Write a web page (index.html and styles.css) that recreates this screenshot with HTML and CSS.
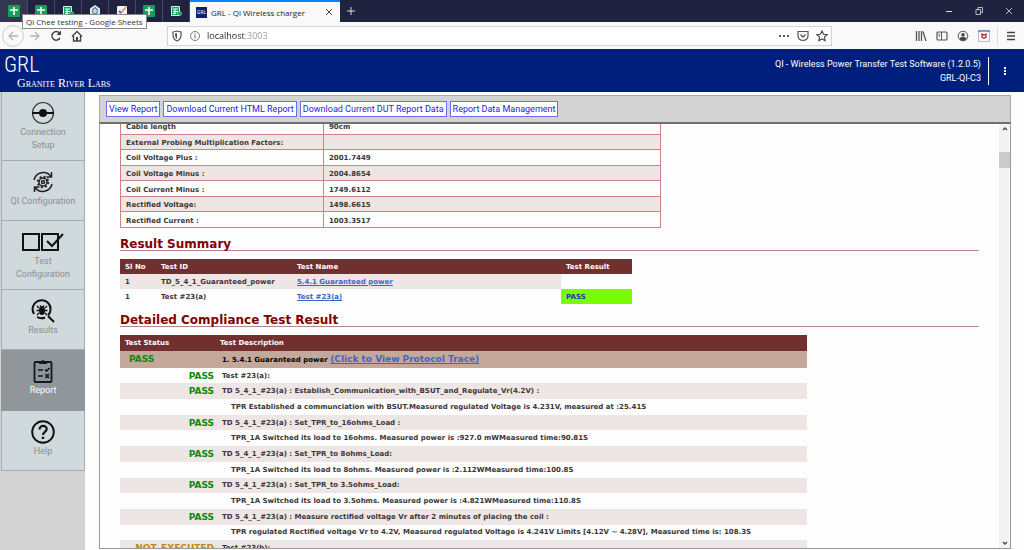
FILE: index.html
```html
<!DOCTYPE html>
<html lang="en">
<head>
<meta charset="utf-8">
<title>GRL - Qi Wireless charger</title>
<link rel="stylesheet" href="styles.css">
</head>
<body>
<svg class="defs" aria-hidden="true">
  <symbol id="sheet" viewBox="0 0 12 12"><rect width="12" height="12" rx="1" fill="#12a05c"/><path d="M6 2v8M2 5h8" stroke="#fff" stroke-width="1.6"/></symbol>
  <symbol id="form" viewBox="0 0 12 12"><path d="M1.5 1.500h8v9h-8z" fill="#12a05c" stroke="#d9f3e5"/><path d="M3 4h5M3 6.500h5M5 4v4.500M3 8.500h3" stroke="#fff"/><path d="M9.500 6l2.500 2.500L9.500 11 7 8.500z" fill="#12a05c" stroke="#d9f3e5" stroke-width=".7"/></symbol>
</svg>
<div class="tabs">
  <button class="tab first" aria-label="Google Sheets"><svg><use href="#sheet"/></svg></button>
  <button class="tab" aria-label="Qi Chee testing"><svg><use href="#sheet"/></svg></button>
  <button class="tab" aria-label="Form"><svg><use href="#form"/></svg></button>
  <button class="tab" aria-label="Layers"><svg viewBox="0 0 12 12"><path d="M6 0l5 3.500v5L6 12 1 8.500v-5z" fill="#e9f1f7"/><path d="M3 5.500l3-3 3 3M3 6.500l3 3 3-3" fill="none" stroke="#3f83b8" stroke-width="1.300"/><path d="M4 6h4" stroke="#e2a53b"/></svg></button>
  <button class="tab" aria-label="Tasks"><svg viewBox="0 0 12 12"><rect x="1" y="1" width="10" height="10" rx="1" fill="#f4f4f4"/><path d="M3 6l2 2 5-6" fill="none" stroke="#db8d49" stroke-width="1.500"/><path d="M3 6l2 2" stroke="#4c79be" stroke-width="2"/></svg></button>
  <button class="tab" aria-label="Google Sheets"><svg><use href="#sheet"/></svg></button>
  <button class="tab" aria-label="Form"><svg><use href="#form"/></svg></button>
  <div class="tab active">
    <span class="favicon">GRL</span>
    <span class="tab-title">GRL - Qi Wireless charger</span>
    <button aria-label="Close tab"><svg viewBox="0 0 8 8"><path d="M1 1l6 6M7 1L1 7" stroke="#444"/></svg></button>
  </div>
  <button class="new-tab" aria-label="New tab"><svg viewBox="0 0 10 10"><path d="M5 1v8M1 5h8" stroke="#ddd"/></svg></button>
  <div class="window-buttons">
    <button aria-label="Minimize"><svg viewBox="0 0 8 8"><path d="M1 4.500h6" stroke="#ddd"/></svg></button>
    <button aria-label="Restore"><svg viewBox="0 0 8 8"><path d="M1 2.500h4.500v5H1zM3 2.500v-2h4.500v5h-2" fill="none" stroke="#ddd" stroke-width=".8"/></svg></button>
    <button aria-label="Close"><svg viewBox="0 0 8 8"><path d="M1 1l6 6M7 1L1 7" stroke="#ddd" stroke-width=".8"/></svg></button>
  </div>
  <div class="tooltip" role="tooltip">Qi Chee testing - Google Sheets</div>
</div>
<div class="toolbar">
  <div class="nav">
    <button class="back" aria-label="Back"><svg viewBox="0 0 12 12"><path d="M11 6H2M6 2L2 6l4 4" fill="none" stroke="#b5b5b5" stroke-width="1.300"/></svg></button>
    <button aria-label="Forward"><svg viewBox="0 0 12 12"><path d="M1 6h9M6 2l4 4-4 4" fill="none" stroke="#b5b5b5" stroke-width="1.300"/></svg></button>
    <button aria-label="Reload"><svg viewBox="0 0 12 12"><path d="M10 8a4.300 4.300 0 1 1-.5-5" fill="none" stroke="#444" stroke-width="1.500"/><path d="M11 .5v4.500H6.500z" fill="#444"/></svg></button>
    <button aria-label="Home"><svg viewBox="0 0 12 12"><path d="M1 6.500L6 1.500l5 5M2.500 6v5h7V6" fill="none" stroke="#444" stroke-width="1.400"/><path d="M5 7h2v4H5z" fill="#444"/></svg></button>
  </div>
  <div class="address">
    <svg viewBox="0 0 12 12"><path d="M2 2l4-1 4 1v3c0 3-1.500 5-4 6-2.500-1-4-3-4-6z" fill="none" stroke="#555" stroke-width="1.200"/><path d="M6 3v6C4.500 8 4 6.500 4 3.500z" fill="#555"/></svg>
    <svg viewBox="0 0 12 12"><circle cx="6" cy="6" r="4.500" fill="none" stroke="#777"/><path d="M6 5.300v3.200M6 3.200v1.200" stroke="#666" stroke-width="1.100"/></svg>
    <input class="url" type="text" aria-label="Address" value="localhost:3003">
    <div class="page-actions">
      <button aria-label="Page actions"><svg viewBox="0 0 12 12"><path d="M1 6h2M5 6h2M9 6h2" stroke="#555" stroke-width="2"/></svg></button>
      <button aria-label="Save to Pocket"><svg viewBox="0 0 12 12"><path d="M1 1.500h10V6a5 4.500 0 0 1-10 0z" fill="none" stroke="#555" stroke-width="1.200"/><path d="M3.500 4.500L6 7l2.500-2.500" fill="none" stroke="#555" stroke-width="1.300"/></svg></button>
      <button aria-label="Bookmark"><svg viewBox="0 0 12 12"><path d="M6 1l1.500 3.300 3.600.4-2.700 2.400.8 3.600L6 8.900l-3.200 1.800.8-3.600L.9 4.700l3.600-.4z" fill="none" stroke="#444" stroke-width="1.100"/></svg></button>
    </div>
  </div>
  <div class="tools">
    <button aria-label="Library"><svg viewBox="0 0 12 12"><path d="M1.500 1v10M4 1v10M6.500 1v10M8 1.500l3 9.500" stroke="#555" stroke-width="1.300"/></svg></button>
    <button aria-label="Sidebars"><svg viewBox="0 0 12 12"><rect x="1" y="2" width="10" height="8" rx="1" fill="none" stroke="#555" stroke-width="1.200"/><path d="M5.500 2v8M2.500 4.200H4M2.500 6H4" stroke="#555"/></svg></button>
    <button aria-label="Account"><svg viewBox="0 0 12 12"><circle cx="6" cy="6" r="4.800" fill="none" stroke="#555"/><circle cx="6" cy="4.700" r="1.800" fill="#444"/><path d="M2.500 9c1-3 6-3 7 0-1.500 2-5.500 2-7 0z" fill="#444"/></svg></button>
    <button aria-label="McAfee"><svg viewBox="0 0 12 12"><rect x=".5" y=".5" width="11" height="11" fill="#f5f5fa" stroke="#b9bcd2"/><path d="M0 1h12" stroke="#5b89c4" stroke-width="1.500"/><path d="M4 4.200L6 5l2-.8v3L6 8.300 4 7.200z" fill="none" stroke="#c01c28" stroke-width="1.300"/></svg></button>
  </div>
  <button class="menu" aria-label="Menu"><svg viewBox="0 0 12 12"><path d="M2 2.500h8M2 6h8M2 9.500h8" stroke="#444" stroke-width="1.300"/></svg></button>
</div>
<header class="app-header">
  <div class="logo"><span class="mark">GRL</span><span class="company">Granite River Labs</span></div>
  <div class="product"><div>QI - Wireless Power Transfer Test Software (1.2.0.5)</div><div>GRL-QI-C3</div></div>
  <button class="more" aria-label="More"><svg viewBox="0 0 4 8"><path d="M1 0h2v2H1zM1 3h2v2H1zM1 6h2v2H1z" fill="#fff"/></svg></button>
</header>
<div class="app">
  <nav class="sidebar">
    <a class="item tall" href="#"><svg viewBox="0 0 24 24"><circle cx="12" cy="12" r="10.500" fill="none" stroke="#333" stroke-width="1.200"/><path d="M1 12h22" stroke="#111" stroke-width="2"/><circle cx="12" cy="12" r="4" fill="#111"/></svg><span>Connection Setup</span></a>
    <a class="item" href="#"><svg viewBox="0 0 24 24"><g fill="none" stroke="#222" stroke-width="1.500"><path d="M3 10a9.500 9.500 0 0 1 17-3.500M21 14a9.500 9.500 0 0 1-17 3.500M20.500 2v5h-5M3.500 22v-5h5"/><circle cx="12" cy="12" r="4"/><circle cx="12" cy="12" r="1.500"/><circle cx="12" cy="12" r="5.200" stroke-width="2" stroke-dasharray="2 2.080"/></g></svg><span>QI Configuration</span></a>
    <a class="item tall" href="#"><svg class="wide" viewBox="0 0 42 20"><path d="M1 2h16v16H1zM20 2h16v16H20z" fill="none" stroke="#111" stroke-width="2"/><path d="M25 9l5 5L41 2" fill="none" stroke="#111" stroke-width="2"/></svg><span>Test Configuration</span></a>
    <a class="item" href="#"><svg viewBox="0 0 24 24"><g fill="none" stroke="#111" stroke-width="2"><path d="M3 15A9 9 0 1 1 17 16.500M14 18.500A9 9 0 0 1 6 18M17 17l6 6"/><path d="M6 7l2 2M16 7l-2 2M5.500 11.500h11M6 16l2-2M16 16l-2-2" stroke-width="1.300"/></g><ellipse cx="11" cy="11.500" rx="3" ry="4.500" fill="#111"/><path d="M9 6l1 2M13 6l-1 2" stroke="#111"/></svg><span>Results</span></a>
    <a class="item current" href="#"><svg viewBox="0 0 24 24"><rect x="3.500" y="3" width="17" height="20" rx="1" fill="none" stroke="#15181c" stroke-width="1.800"/><path d="M8 2h2.500q1.500-2 3 0H16v3H8z" fill="#15181c"/><path d="M7 11h5M7 17h5M14 10.500l1.500 1.500 3-3M14.500 15l3.500 4M18 15l-3.500 4" fill="none" stroke="#15181c" stroke-width="1.700"/></svg><span>Report</span></a>
    <a class="item" href="#"><svg viewBox="0 0 24 24"><circle cx="12" cy="12" r="10.800" fill="none" stroke="#111" stroke-width="1.900"/><path d="M8.500 9.500c0-5 7.500-4.500 7.200-.3C15.500 12 12 12 12 15" fill="none" stroke="#111" stroke-width="2.200"/><path d="M10.800 16.800h2.400v2.200h-2.400z" fill="#111"/></svg><span>Help</span></a>
  </nav>
  <main class="panel">
    <div class="actions">
      <button>View Report</button>
      <button>Download Current HTML Report</button>
      <button>Download Current DUT Report Data</button>
      <button>Report Data Management</button>
    </div>
    <div class="viewer">
      <div class="report">
        <table class="info">
          <tr><td>Cable length</td><td>90cm</td></tr>
          <tr><td>External Probing Multiplication Factors:</td><td></td></tr>
          <tr><td>Coil Voltage Plus :</td><td>2001.7449</td></tr>
          <tr><td>Coil Voltage Minus :</td><td>2004.8654</td></tr>
          <tr><td>Coil Current Minus :</td><td>1749.6112</td></tr>
          <tr><td>Rectified Voltage:</td><td>1498.6615</td></tr>
          <tr><td>Rectified Current :</td><td>1003.3517</td></tr>
        </table>
        <h2>Result Summary</h2>
        <table class="summary">
          <tr><th>Sl No</th><th>Test ID</th><th>Test Name</th><th>Test Result</th></tr>
          <tr class="shade"><td>1</td><td>TD_5_4_1_Guaranteed_power</td><td><a href="#">5.4.1 Guaranteed power</a></td><td class="blank"></td></tr>
          <tr><td>1</td><td>Test #23(a)</td><td><a href="#">Test #23(a)</a></td><td class="ok">PASS</td></tr>
        </table>
        <h2>Detailed Compliance Test Result</h2>
        <table class="detail">
          <tr><th>Test Status</th><th>Test Description</th></tr>
          <tr class="group"><td>PASS</td><td>1. 5.4.1 Guaranteed power <a href="#">(Click to View Protocol Trace)</a></td></tr>
          <tr><td>PASS</td><td>Test #23(a):</td></tr>
          <tr class="shade"><td>PASS</td><td>TD 5_4_1_#23(a) : Establish_Communication_with_BSUT_and_Regulate_Vr(4.2V) :</td></tr>
          <tr class="note"><td></td><td>TPR Established a communciation with BSUT.Measured regulated Voltage is 4.231V, measured at :25.41S</td></tr>
          <tr class="shade"><td>PASS</td><td>TD 5_4_1_#23(a) : Set_TPR_to_16ohms_Load :</td></tr>
          <tr class="note"><td></td><td>TPR_1A Switched its load to 16ohms. Measured power is :927.0 mWMeasured time:90.81S</td></tr>
          <tr class="shade"><td>PASS</td><td>TD 5_4_1_#23(a) : Set_TPR_to 8ohms_Load:</td></tr>
          <tr class="note"><td></td><td>TPR_1A Switched its load to 8ohms. Measured power is :2.112WMeasured time:100.8S</td></tr>
          <tr class="shade"><td>PASS</td><td>TD 5_4_1_#23(a) : Set_TPR_to 3.5ohms_Load:</td></tr>
          <tr class="note"><td></td><td>TPR_1A Switched its load to 3.5ohms. Measured power is :4.821WMeasured time:110.8S</td></tr>
          <tr class="shade"><td>PASS</td><td>TD 5_4_1_#23(a) : Measure rectified voltage Vr after 2 minutes of placing the coil :</td></tr>
          <tr class="note"><td></td><td>TPR regulated Rectified voltage Vr to 4.2V, Measured regulated Voltage is 4.241V Limits [4.12V ~ 4.28V], Measured time is: 108.3S</td></tr>
          <tr class="shade skipped"><td>NOT_EXECUTED</td><td>Test #23(b):</td></tr>
        </table>
      </div>
      <div class="scrollbar">
        <svg viewBox="0 0 8 8"><path d="M2 5l2-2 2 2" fill="none" stroke="#444" stroke-width="1.300"/></svg>
        <div class="track"><div class="thumb"></div></div>
        <svg viewBox="0 0 8 8"><path d="M2 3l2 2 2-2" fill="none" stroke="#444" stroke-width="1.300"/></svg>
      </div>
    </div>
  </main>
</div>
</body>
</html>
```
FILE: styles.css
```css
* { box-sizing: border-box; }
body {
  margin: 0;
  height: 100vh;
  display: flex;
  flex-direction: column;
  overflow: hidden;
  background: #fdfdfd;
  font-family: Roboto, "Liberation Sans", Arial, sans-serif;
  font-size: 9px;
}
button {
  margin: 0;
  padding: 0;
  border: 0;
  background: none;
  font: inherit;
  display: flex;
  align-items: center;
  justify-content: center;
}
svg { display: block; flex: none; width: 12px; height: 12px; }
.defs { position: absolute; width: 0; height: 0; }

/* Browser tabs */
.tabs {
  position: relative;
  display: flex;
  flex: none;
  height: 22px;
  background: #202340;
}
.tab { width: 27px; border-right: 1px solid #45486a; }
.tab.first { width: 28px; background: #34364f; }
.tab.active {
  width: 150px;
  display: flex;
  align-items: center;
  gap: 4px;
  padding: 0 7px 0 6px;
  background: #f9f9fa;
  border: 0;
  border-top: 2px solid #0a84ff;
  font-family: "Open Sans", "Noto Sans", sans-serif;
  font-size: 8px;
  color: #222;
}
.favicon {
  width: 11px;
  line-height: 11px;
  background: #0b2270;
  color: #fff;
  font-size: 5px;
  text-align: center;
}
.tab-title { flex: 1; white-space: nowrap; }
.tab.active svg { width: 8px; height: 8px; }
.new-tab { width: 22px; }
.new-tab svg { width: 10px; height: 10px; }
.window-buttons { display: flex; gap: 6px; margin-left: auto; padding-right: 3px; }
.window-buttons button { width: 24px; }
.window-buttons svg { width: 8px; height: 8px; }
.tooltip {
  position: absolute;
  z-index: 2;
  left: 22px;
  top: 14px;
  padding: 0 3px;
  border: 1px solid #888;
  background: #fff;
  color: #333;
  font-family: "Open Sans", "Noto Sans", sans-serif;
  font-size: 8px;
  line-height: 13px;
  white-space: nowrap;
}

/* Browser toolbar */
.toolbar {
  display: flex;
  flex: none;
  align-items: center;
  height: 27px;
  background: #f9f9fa;
}
.nav { display: flex; align-items: center; width: 167px; padding-left: 2px; }
.nav button { width: 21px; height: 21px; }
.nav .back { border: 1px solid #ccc; border-radius: 50%; width: 22px; height: 22px; }
.address {
  flex: 1;
  display: flex;
  align-items: center;
  gap: 6px;
  height: 20px;
  padding: 0 3px;
  background: #fff;
  border: 1px solid #d4d4d4;
}
.url {
  flex: 1;
  min-width: 0;
  border: 0;
  padding: 0;
  font-family: "Open Sans", "Noto Sans", sans-serif;
  font-size: 9px;
  color: transparent;
  background: linear-gradient(90deg, #222 38px, #999 38px);
  background-clip: text;
  -webkit-background-clip: text;
}
.page-actions { display: flex; gap: 7px; }
.tools { display: flex; gap: 9px; padding: 0 7px 0 83px; }
.menu { width: 27px; height: 20px; border-left: 1px solid #ddd; }

/* Application header */
.app-header {
  display: flex;
  flex: none;
  align-items: center;
  height: 43px;
  padding: 0 17px 0 4px;
  background: #001f7c;
  color: #fff;
}
.logo { display: flex; flex-direction: column; flex: 1; }
.mark {
  font-family: "Liberation Sans Narrow", "Roboto Condensed", "Open Sans Condensed", Lato, sans-serif;
  font-size: 22px;
  font-weight: 300;
  line-height: 24px;
}
.company {
  padding-left: 13px;
  font-family: "Liberation Serif", serif;
  font-size: 12px;
  line-height: 12px;
  font-variant: small-caps;
}
.product { padding: 0 7px; border-right: 1px solid #fff; line-height: 14px; text-align: right; }
.more { width: 4px; margin-left: 14px; }
.more svg { width: 4px; height: 8px; }

/* Side navigation */
.app { display: flex; flex: 1; min-height: 0; }
.sidebar {
  width: 85px;
  padding-left: 1px;
  background: #d3d3d3;
}
.item {
  display: flex;
  flex-direction: column;
  align-items: center;
  height: 60px;
  padding: 9px 12px 0;
  gap: 1px;
  border: 1px solid #a3aeb3;
  border-top: 0;
  background: #d0d9dc;
  color: #8a8f92;
  line-height: 13px;
  text-align: center;
  text-decoration: none;
}
.item span { margin: 0 -8px; }
.item.tall { height: 69px; }
.item.tall span { width: 56px; margin: 0; }
.item svg { width: 24px; height: 24px; }
.item svg.wide { width: 42px; height: 24px; }
.item.current { height: 61px; background: #91969b; border-color: #91969b; color: #fff; }

/* Report panel */
.panel {
  flex: 1;
  display: flex;
  flex-direction: column;
  min-width: 0;
  margin: 3px 13px 1px 14px;
}
.actions {
  display: flex;
  flex: none;
  gap: 3px;
  height: 27px;
  padding: 5px 6px;
  border: 1px solid #aaa;
  border-bottom: 0;
  background: #d3d3d3;
}
.actions button {
  height: 16px;
  padding: 0 2px;
  border: 1px solid #6c6cf5;
  background: #fff;
  color: #1c1ce8;
  white-space: nowrap;
}
.viewer {
  flex: 1;
  display: flex;
  min-height: 0;
  border: 1px solid #999;
  border-top: 2px solid #707070;
}
.report {
  flex: 1;
  min-width: 0;
  overflow: hidden;
  padding: 0 20px;
  font-family: "DejaVu Sans", Verdana, sans-serif;
  font-size: 7px;
  font-weight: bold;
  color: #3c3638;
}
table { border-collapse: collapse; border-spacing: 0; }
td, th { padding: 0 5px; text-align: left; line-height: 12px; white-space: nowrap; }
a { color: #3a66c8; }
.info { width: 541px; height: 110px; margin-top: -6px; table-layout: fixed; }
.info td { padding-top: 2px; border: 1px solid #cf8080; }
.info td:first-child { width: 203px; }
.info tr:nth-child(even), .shade { background: #eee6e4; }
h2 {
  margin: 10px 0 8px;
  border-bottom: 1px solid #b58a88;
  color: #800000;
  font-size: 12px;
  line-height: 12px;
}
.summary { width: 512px; table-layout: fixed; }
.summary tr { height: 15px; }
.summary th:nth-child(1) { width: 36px; }
.summary th:nth-child(2) { width: 136px; }
.summary th:nth-child(4) { width: 71px; }
th { background: #722f2f; color: #fff; }
.blank { background: #fdfdfd; }
.ok { background: #7cfc00; color: #1a35b5; }
.detail { width: 687px; height: 221px; table-layout: fixed; }
.detail th:first-child { width: 95px; }
.detail td:first-child { padding: 0 1px 0 0; color: #0a8a0a; font-size: 9px; text-align: right; }
.detail td:last-child { padding-left: 7px; }
.detail .note td:last-child { padding-left: 16px; }
.detail .group { background: #c4a89b; color: #000; }
.detail .group td:first-child { padding-left: 9px; text-align: left; }
.group a { font-size: 9px; }
.detail .skipped td:first-child { color: #c08a1a; }

/* Scrollbar */
.scrollbar {
  display: flex;
  flex-direction: column;
  align-items: center;
  width: 11px;
  padding: 1px 0;
  background: #f3f3f3;
}
.scrollbar svg { width: 8px; height: 8px; }
.track { flex: 1; align-self: stretch; padding-top: 19px; }
.thumb { height: 16px; background: #cbcbcb; }
```
